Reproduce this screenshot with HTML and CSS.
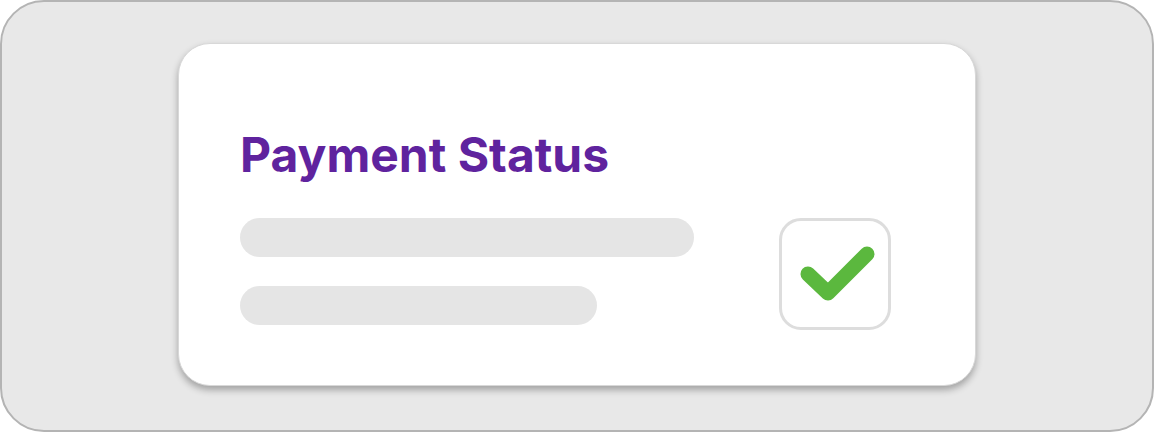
FILE: index.html
```
<!DOCTYPE html>
<html lang="en">
<head>
<meta charset="utf-8">
<title>Payment Status</title>
<link rel="stylesheet" href="styles.css">
</head>
<body>
<div class="frame">
  <div class="card">
    <h1 class="title">Payment Status</h1>
    <div class="row">
      <div class="bars">
        <div class="bar bar-long"></div>
        <div class="bar bar-short"></div>
      </div>
      <div class="checkbox">
        <svg width="106" height="106" viewBox="0 0 106 106">
          <polyline points="26,53 46,72 85,33" fill="none" stroke="#5bb83e" stroke-width="15" stroke-linecap="round" stroke-linejoin="round"/>
        </svg>
      </div>
    </div>
  </div>
</div>
</body>
</html>
```

FILE: styles.css
```
html, body {
  margin: 0;
  padding: 0;
  background: #ffffff;
}
body {
  width: 1154px;
  height: 432px;
  font-family: Inter, "Noto Sans", sans-serif;
}
.frame {
  box-sizing: border-box;
  width: 1154px;
  height: 432px;
  background: #e8e8e8;
  border: 2px solid #b4b4b4;
  border-radius: 44px;
  padding-top: 41px;
  display: flex;
  justify-content: center;
  align-items: flex-start;
}
.card {
  box-sizing: border-box;
  width: 798px;
  height: 343px;
  background: #ffffff;
  border: 1px solid #d8d8d8;
  border-radius: 32px;
  box-shadow: 0 4px 7px rgba(0, 0, 0, 0.3);
  padding: 82px 84px 0 61px;
}
.title {
  margin: 0;
  font-size: 48px;
  line-height: 58px;
  font-weight: 700;
  color: #5f239e;
  letter-spacing: 0;
}
.row {
  margin-top: 34px;
  display: flex;
  align-items: flex-start;
  justify-content: space-between;
}
.bars {
  display: flex;
  flex-direction: column;
  gap: 29px;
}
.bar {
  height: 39px;
  border-radius: 20px;
  background: #e5e5e5;
}
.bar-long { width: 454px; }
.bar-short { width: 357px; }
.checkbox {
  width: 106px;
  height: 106px;
  border: 3px solid #dddddd;
  border-radius: 22px;
  background: #ffffff;
}
.checkbox svg { display: block; }
```
